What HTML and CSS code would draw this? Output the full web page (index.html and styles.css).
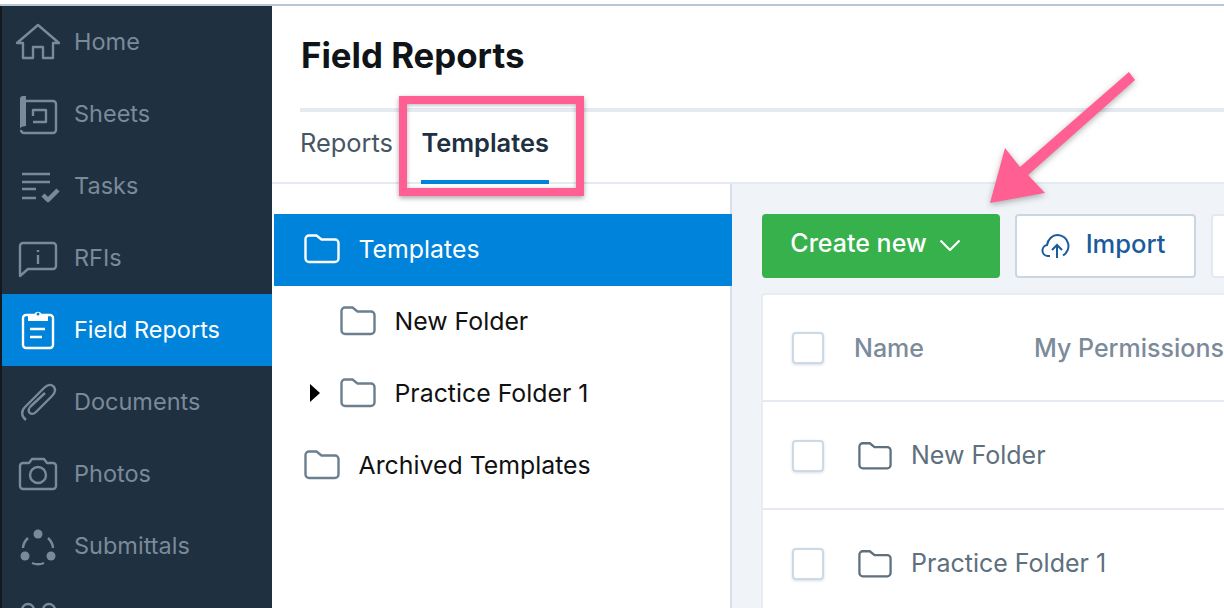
FILE: index.html
```html
<!DOCTYPE html>
<html lang="en">
<head>
  <meta charset="UTF-8" />
  <title>Field Reports</title>
  <link rel="stylesheet" href="styles.css">
</head>
<body>
  <svg class="sprite" width="0" height="0">
    <symbol id="folder" viewBox="0 0 36 30">
      <path d="M1.500 5a3.500 3.500 0 0 1 3.500-3.500h7.500l5 4h13.500a3.500 3.500 0 0 1 3.500 3.500v15.500a3.500 3.500 0 0 1-3.500 3.500h-26a3.500 3.500 0 0 1-3.500-3.500z" />
    </symbol>
  </svg>

  <div class="top-line"></div>
  <div class="app">
    <nav class="sidebar">
      <a class="nav-item">
        <svg class="nav-icon" viewBox="0 0 48 48"><path d="M24 6 3 24h6v15h10V28h10v11h10V24h6z" /></svg>
        Home
      </a>
      <a class="nav-item">
        <svg class="nav-icon" viewBox="0 0 48 48">
          <path d="M10 10h29a3 3 0 0 1 3 3v26a3 3 0 0 1-3 3H10a3 3 0 0 1-3-3" />
          <path class="solid" d="M6 38V8a3 3 0 0 1 3-3h3v30l-3 .5a3 3 0 0 0-3 2.500z" />
          <path d="M19 25v-6h13v12H19" />
        </svg>
        Sheets
      </a>
      <a class="nav-item">
        <svg class="nav-icon" viewBox="0 0 48 48">
          <path d="M8 11h28M8 19h28M8 26h14M8 35h14" />
          <path class="thick" d="m29 32 5 5 10-10" />
        </svg>
        Tasks
      </a>
      <a class="nav-item">
        <svg class="nav-icon" viewBox="0 0 48 48">
          <path d="M6 41V11a3 3 0 0 1 3-3h30a3 3 0 0 1 3 3v20a3 3 0 0 1-3 3H14z" />
          <path d="M24 20v9M24 15v2" />
        </svg>
        RFIs
      </a>
      <a class="nav-item active">
        <svg class="nav-icon" viewBox="0 0 48 48">
          <rect x="9" y="8" width="30" height="33" rx="3" />
          <path class="solid" d="M14 7h6.500a3.800 3.800 0 0 1 7 0H34v7H14z" />
          <circle class="hole" cx="24" cy="7" r="1.500" />
          <path d="M16 22h15M16 30h12" />
        </svg>
        Field Reports
      </a>
      <a class="nav-item">
        <svg class="nav-icon" viewBox="0 0 48 48">
          <path d="M12 41C7 37 7 32 11 28L30 9c4-4 8-4 10-1s1 6-2 9L22 33c-3 3-6 2-7 0s0-4 2-6l14-13" />
        </svg>
        Documents
      </a>
      <a class="nav-item">
        <svg class="nav-icon" viewBox="0 0 48 48">
          <path d="M9 12h6l3-4h12l3 4h6a3 3 0 0 1 3 3v20a3 3 0 0 1-3 3H9a3 3 0 0 1-3-3V15a3 3 0 0 1 3-3z" />
          <circle cx="24" cy="24" r="8" />
        </svg>
        Photos
      </a>
      <a class="nav-item">
        <svg class="nav-icon" viewBox="0 0 48 48">
          <circle class="solid" cx="24" cy="11" r="4.500" />
          <circle class="solid" cx="11" cy="33" r="4.500" />
          <circle class="solid" cx="37" cy="33" r="4.500" />
          <path d="M9 25a15 15 0 0 1 5-10M39 25a15 15 0 0 0-5-10M18 40a15 15 0 0 0 12 0" />
        </svg>
        Submittals
      </a>
      <a class="nav-item">
        <svg class="nav-icon" viewBox="0 0 48 48">
          <circle cx="14" cy="15" r="6" />
          <circle cx="35" cy="15" r="6" />
        </svg>
      </a>
    </nav>

    <main class="content">
      <header class="page-head">
        <h1>Field Reports</h1>
        <div class="tabs">
          <a class="tab">Reports</a>
          <a class="tab tab-active">Templates</a>
        </div>
      </header>

      <div class="split">
        <aside class="tree">
          <div class="tree-row selected">
            <svg class="folder"><use href="#folder" /></svg>
            Templates
          </div>
          <div class="tree-row nested">
            <svg class="folder"><use href="#folder" /></svg>
            New Folder
          </div>
          <div class="tree-row nested">
            <span class="caret"></span>
            <svg class="folder"><use href="#folder" /></svg>
            Practice Folder 1
          </div>
          <div class="tree-row">
            <svg class="folder"><use href="#folder" /></svg>
            Archived Templates
          </div>
        </aside>

        <section class="panel">
          <div class="toolbar">
            <button class="btn btn-green">
              Create new
              <svg class="chevron" viewBox="0 0 22 12"><path d="m1.500 1.500 9.500 9.500 9.500-9.500" /></svg>
            </button>
            <button class="btn btn-white">
              <svg class="cloud" viewBox="0 0 30 26">
                <path d="M9 23H6.500a5.500 5.500 0 0 1-.5-10.900C7 6 11.500 2 16.500 2A11 11 0 0 1 22 22.500" />
                <path d="M16 25V12.500M11 17l5-5 5 5" />
              </svg>
              Import
            </button>
            <button class="btn btn-white btn-more"></button>
          </div>

          <div class="table">
            <div class="table-row table-head">
              <span class="check"></span>
              <span class="col-name">Name</span>
              <span class="col-perm">My Permissions</span>
            </div>
            <div class="table-row">
              <span class="check"></span>
              <svg class="folder"><use href="#folder" /></svg>
              New Folder
            </div>
            <div class="table-row">
              <span class="check"></span>
              <svg class="folder"><use href="#folder" /></svg>
              Practice Folder 1
            </div>
          </div>
        </section>
      </div>
    </main>
  </div>

  <!-- annotations drawn on top of the screenshot -->
  <div class="callout-box"></div>
  <svg class="callout-arrow" viewBox="0 0 1224 608">
    <path d="M1129 72 1135 80 1028 175 1045 193 990 203 1005 148 1020 167z" />
  </svg>
</body>
</html>
```

FILE: styles.css
```css
:root {
  --navy: #1f3040;
  --blue: #0083db;
  --nav-text: #7b8a99;
  --pink: #ff5f92;
  --line: #e4eaf0;
}

* {
  box-sizing: border-box;
}

html,
body {
  height: 100%;
}

body {
  margin: 0;
  overflow: hidden;
  position: relative;
  background: #fff;
  font-family: Inter, "Noto Sans", sans-serif;
  font-size: 25px;
  color: #111;
  display: flex;
  flex-direction: column;
}

.sprite {
  position: absolute;
}

.top-line {
  height: 6px;
  flex: none;
  background: linear-gradient(#fff 0 4px, #b9c7d3 4px);
}

.app {
  flex: 1;
  display: flex;
  min-height: 0;
  border-left: 2px solid #15191d;
}

/* sidebar */
.sidebar {
  width: 270px;
  flex: none;
  height: 602px;
  overflow: hidden;
  background: var(--navy);
}

.nav-item {
  height: 72px;
  padding-left: 12px;
  display: flex;
  align-items: center;
  gap: 12px;
  font-size: 23.500px;
  color: var(--nav-text);
  line-height: 26px;
}

.nav-item.active {
  background: var(--blue);
  color: #fff;
}

.nav-icon {
  width: 48px;
  height: 48px;
  flex: none;
  margin-bottom: -1px;
  fill: none;
  stroke: currentColor;
  stroke-width: 2.400;
  stroke-linejoin: round;
}

.nav-icon .solid {
  fill: currentColor;
  stroke: none;
}

.nav-icon .hole {
  fill: var(--blue);
  stroke: none;
}

.nav-icon .thick {
  stroke-width: 4.500;
}

/* header + tabs */
.content {
  flex: 1;
  min-width: 0;
  display: flex;
  flex-direction: column;
}

.page-head {
  flex: none;
  height: 178px;
  padding-left: 28px;
  border-bottom: 2px solid var(--line);
}

h1 {
  margin: 0;
  height: 106px;
  border-bottom: 4px solid var(--line);
  display: flex;
  align-items: center;
  font-size: 34.800px;
  font-weight: 700;
  color: #0f1418;
  padding: 0 0 4px 1px;
}

.tabs {
  display: flex;
  gap: 28.500px;
  height: 72px;
}

.tab {
  display: flex;
  align-items: center;
  font-size: 25.400px;
  color: #465664;
  height: 72px;
  padding-bottom: 12px;
}

.tab-active {
  font-weight: 600;
  color: #203040;
  border-bottom: 4px solid var(--blue);
  padding-bottom: 8px;
}

/* folder tree */
.split {
  flex: 1;
  display: flex;
  min-height: 0;
}

.tree {
  width: 458px;
  flex: none;
  padding-top: 30px;
}

.tree-row {
  height: 72px;
  display: flex;
  align-items: center;
  gap: 18.500px;
  padding-left: 30px;
  padding-bottom: 2px;
  margin-left: 2px;
  font-size: 24.850px;
  line-height: 28px;
}

.tree-row.nested {
  padding-left: 66px;
}

.tree-row.selected {
  position: relative;
  margin-right: -2px;
  background: var(--blue);
  color: #fff;
}

.folder {
  width: 36px;
  height: 30px;
  flex: none;
  fill: none;
  stroke: #6c7f90;
  stroke-width: 2.400;
}

.selected .folder {
  stroke: #fff;
}

.caret {
  width: 0;
  height: 0;
  margin-left: -30px;
  margin-right: 1.500px;
  border-left: 10px solid #000;
  border-top: 9px solid transparent;
  border-bottom: 9px solid transparent;
}

/* right panel */
.panel {
  flex: 1;
  min-width: 0;
  background: #f0f4f8;
  border-left: 2px solid #d5e0ea;
  padding: 30px 0 0 30px;
}

.toolbar {
  display: flex;
  align-items: center;
  gap: 15px;
  height: 64px;
  margin-bottom: 15px;
}

.btn {
  font: inherit;
  font-weight: 500;
  height: 64px;
  padding: 0 0 6px;
  display: flex;
  align-items: center;
  justify-content: center;
  flex: none;
  border-radius: 4px;
  cursor: pointer;
}

.btn-green {
  width: 238px;
  gap: 12px;
  padding-right: 11px;
  color: #fff;
  background: #36b14c;
  border: none;
}

.chevron {
  width: 22px;
  height: 12px;
  margin-top: 4px;
  fill: none;
  stroke: #fff;
  stroke-width: 2.200;
}

.btn-white {
  width: 181px;
  gap: 15px;
  padding-right: 5px;
  font-size: 25.500px;
  color: #1a5b9c;
  background: #fff;
  border: 2px solid #cad6e2;
}

.btn-more {
  width: 60px;
  border-color: #e3e9ef;
}

.cloud {
  width: 30px;
  height: 26px;
  margin-top: 6px;
  fill: none;
  stroke: #1a5b9c;
  stroke-width: 2;
}

.table {
  background: #fff;
  margin-left: 1px;
  border-top: 2px solid #e8edf2;
  border-top-left-radius: 4px;
  box-shadow: -2px 0 0 #e8edf2;
}

.table-row {
  height: 108px;
  display: flex;
  align-items: center;
  padding-left: 29px;
  color: #5e6f7e;
  border-bottom: 2px solid var(--line);
}

.table-row .check {
  margin-top: 2px;
}

.table-row .folder {
  width: 34px;
  height: 30px;
  margin-top: 2px;
  stroke: #5e6f7e;
  margin-left: 34px;
  margin-right: 19px;
}

.table-head {
  height: 107px;
  font-weight: 500;
  color: #7c8b99;
}

.table-head .check {
  margin-top: 0;
}

.check {
  width: 32px;
  height: 32px;
  flex: none;
  background: #fff;
  border: 2px solid #ccdae6;
  border-radius: 4px;
  box-shadow: 0 1px 3px rgba(60, 90, 120, 0.2);
}

.col-name {
  margin-left: 30px;
  width: 180px;
}

.col-perm {
  white-space: nowrap;
}

/* annotations */
.callout-box {
  position: absolute;
  left: 399px;
  top: 96px;
  width: 185px;
  height: 100px;
  border: 8px solid var(--pink);
  box-shadow: 0 2px 5px rgba(0, 0, 0, 0.35), inset 0 1px 4px rgba(0, 0, 0, 0.3);
}

.callout-arrow {
  position: absolute;
  left: 0;
  top: 0;
  width: 1224px;
  height: 608px;
  fill: var(--pink);
  filter: drop-shadow(0 2px 3px rgba(0, 0, 0, 0.3));
}
```
